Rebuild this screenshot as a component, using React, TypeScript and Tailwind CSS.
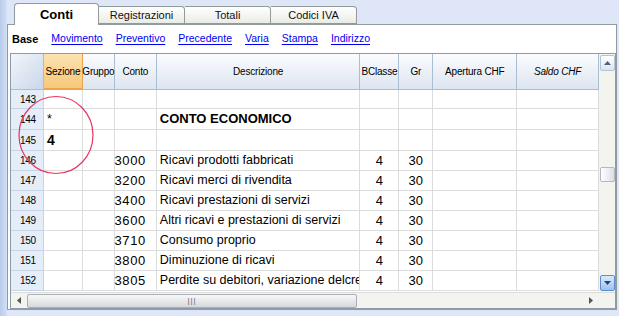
import React from 'react';

const cols = [
  { key: 'sez', w: 'w-[39px]', label: 'Sezione' },
  { key: 'grp', w: 'w-[32px]', label: 'Gruppo' },
  { key: 'conto', w: 'w-[42px]', label: 'Conto' },
  { key: 'desc', w: 'w-[204px]', label: 'Descrizione' },
  { key: 'bcl', w: 'w-[39px]', label: 'BClasse' },
  { key: 'gr', w: 'w-[34px]', label: 'Gr' },
  { key: 'ap', w: 'w-[84px]', label: 'Apertura CHF' },
  { key: 'saldo', w: 'w-[82px]', label: 'Saldo CHF' },
];

const rows = [
  { n: 143, h: 'h-[19px]' },
  { n: 144, h: 'h-[21px]', sez: '*', desc: 'CONTO ECONOMICO', bold: true },
  { n: 145, h: 'h-[21px]', sez: '4', big: true },
  { n: 146, h: 'h-[20px]', conto: '3000', desc: 'Ricavi prodotti fabbricati', bcl: '4', gr: '30' },
  { n: 147, h: 'h-[20px]', conto: '3200', desc: 'Ricavi merci di rivendita', bcl: '4', gr: '30' },
  { n: 148, h: 'h-[20px]', conto: '3400', desc: 'Ricavi prestazioni di servizi', bcl: '4', gr: '30' },
  { n: 149, h: 'h-[20px]', conto: '3600', desc: 'Altri ricavi e prestazioni di servizi', bcl: '4', gr: '30' },
  { n: 150, h: 'h-[20px]', conto: '3710', desc: 'Consumo proprio', bcl: '4', gr: '30' },
  { n: 151, h: 'h-[20px]', conto: '3800', desc: 'Diminuzione di ricavi', bcl: '4', gr: '30' },
  { n: 152, h: 'h-[20px]', conto: '3805', desc: 'Perdite su debitori, variazione delcre', bcl: '4', gr: '30' },
];

const tabs = ['Registrazioni', 'Totali', 'Codici IVA'];
const links = ['Movimento', 'Preventivo', 'Precedente', 'Varia', 'Stampa', 'Indirizzo'];

export default function App() {
  return (
    <div className="w-[619px] h-[316px] flex bg-[#dfe6f8] font-['Liberation_Sans',Arial,sans-serif] text-black overflow-hidden">
      {/* window side strip */}
      <div className="w-[7px] h-full bg-gradient-to-r from-[#b7cbea] to-[#d3e0f5]" />

      <div className="flex flex-col w-[610px]">
        {/* tabs */}
        <div className="h-[24px] flex items-end pl-[7px] relative z-10">
          <div className="w-[85px] h-[22px] -mb-px bg-white border border-b-0 border-[#919b9c] rounded-t-[4px] flex items-center justify-center text-[13px] font-bold">
            Conti
          </div>
          {tabs.map(t => (
            <div key={t} className="w-[86px] h-[18px] bg-gradient-to-b from-white to-[#ebebe6] border border-l-0 border-[#919b9c] rounded-tr-[4px] flex items-center justify-center text-[11px] text-[#111]">
              {t}
            </div>
          ))}
        </div>

        {/* panel */}
        <div className="w-[610px] h-[286px] bg-white border border-[#919b9c] flex flex-col pl-[2px] pr-[1px]">
          <div className="h-[28px] flex items-center gap-[13px] pl-[2px] text-[10.5px]">
            <span className="font-bold text-[11px]">Base</span>
            {links.map(l => (
              <span key={l} className="text-[#0000ee] underline underline-offset-2">{l}</span>
            ))}
          </div>

          {/* grid frame */}
          <div className="relative w-[606px] h-[256px] border border-[#8e9bab] flex flex-col">
            <div className="flex flex-1 min-h-0">
              <div className="flex flex-col w-[588px]">
                {/* header */}
                <div className="flex h-[36px] text-[10px] tracking-[-0.2px]">
                  <div className="w-[33px] bg-gradient-to-br from-[#f3f6fb] to-[#c9d6ea] border-r border-b border-[#a9bdd3]" />
                  {cols.map(c => (
                    <div
                      key={c.key}
                      className={
                        c.key === 'sez'
                          ? `${c.w} flex items-center justify-center bg-gradient-to-b from-[#fce2b2] to-[#f7c878] border-r border-b-2 border-[#eea448]`
                          : `${c.w} flex items-center justify-center bg-gradient-to-b from-[#fbfcfe] to-[#dde5f0] border-r border-b border-[#a9bdd3] ${c.key === 'saldo' ? 'italic' : ''}`
                      }
                    >
                      {c.label}
                    </div>
                  ))}
                </div>

                {/* rows */}
                {rows.map(r => (
                  <div key={r.n} className={`flex ${r.h} text-[12.5px]`}>
                    <div className="w-[33px] bg-[#e5edf8] border-r border-b border-[#c5d3e4] flex items-center pl-[9px] text-[10px] tracking-[-0.3px]">
                      {r.n}
                    </div>
                    <div className="w-[39px] border-r border-b border-[#dcdcdc] flex items-center pl-[3px]">
                      {r.big ? <span className="font-bold text-[14px]">{r.sez}</span> : r.sez}
                    </div>
                    <div className="w-[32px] border-r border-b border-[#dcdcdc]" />
                    <div className="w-[42px] border-r border-b border-[#dcdcdc] flex items-center justify-end pr-[10px] tracking-[0.6px] text-[13px]">{r.conto}</div>
                    <div className={`w-[204px] border-r border-b border-[#dcdcdc] flex items-center pl-[3px] whitespace-nowrap overflow-hidden ${r.bold ? 'font-bold text-[13px]' : ''}`}>
                      {r.desc}
                    </div>
                    <div className="w-[39px] border-r border-b border-[#dcdcdc] flex items-center justify-center text-[13px]">{r.bcl}</div>
                    <div className="w-[34px] border-r border-b border-[#dcdcdc] flex items-center justify-center text-[13px]">{r.gr}</div>
                    <div className="w-[84px] border-r border-b border-[#dcdcdc]" />
                    <div className="w-[82px] border-r border-b border-[#dcdcdc]" />
                  </div>
                ))}
              </div>

              {/* vertical scrollbar */}
              <div className="w-[16px] bg-[#f3f3ef] flex flex-col items-center py-[1px]">
                <div className="w-[15px] h-[16px] border border-[#b5c3d8] rounded-[2px] bg-gradient-to-b from-white to-[#dfe4ec] flex items-center justify-center">
                  <svg width="7" height="4" viewBox="0 0 7 4"><path d="M0 4 L3.5 0 L7 4 Z" fill="#4d6185" /></svg>
                </div>
                <div className="flex-1 flex flex-col justify-start pt-[96px]">
                  <div className="w-[15px] h-[15px] border border-[#b0b8c4] rounded-[2px] bg-gradient-to-r from-white to-[#dcdfe5]" />
                </div>
                <div className="w-[15px] h-[16px] border border-[#5a8ed0] rounded-[2px] bg-gradient-to-b from-[#dceaf9] to-[#9cc2ee] flex items-center justify-center">
                  <svg width="7" height="4" viewBox="0 0 7 4"><path d="M0 0 L3.5 4 L7 0 Z" fill="#25437a" /></svg>
                </div>
              </div>
            </div>

            {/* horizontal scrollbar */}
            <div className="h-[16px] flex items-center bg-[#f3f3ef] border-t border-[#dcdcdc]">
              <div className="w-[16px] flex items-center justify-center">
                <svg width="4" height="7" viewBox="0 0 4 7"><path d="M4 0 L0 3.5 L4 7 Z" fill="#555" /></svg>
              </div>
              <div className="w-[330px] h-[14px] border border-[#a9afb8] rounded-[2px] bg-gradient-to-b from-[#f8f8f8] to-[#d6d8dc] flex items-center justify-center">
                <span className="text-[8px] leading-none text-[#666] tracking-[1px]">|||</span>
              </div>
              <div className="flex-1" />
              <div className="w-[16px] flex items-center justify-center mr-[16px]">
                <svg width="4" height="7" viewBox="0 0 4 7"><path d="M0 0 L4 3.5 L0 7 Z" fill="#555" /></svg>
              </div>
            </div>

            {/* annotation circle */}
            <svg className="absolute left-[6px] top-[41px] pointer-events-none" width="78" height="80" viewBox="0 0 78 80">
              <ellipse cx="39" cy="40" rx="37" ry="38.5" fill="none" stroke="#e8355f" strokeWidth="1.2" />
            </svg>
          </div>
        </div>
      </div>
    </div>
  );
}
